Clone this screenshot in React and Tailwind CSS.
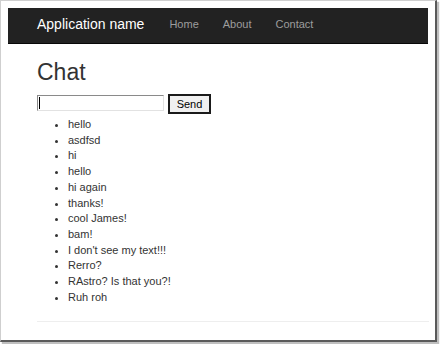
import React from "react";

const messages = [
  "hello",
  "asdfsd",
  "hi",
  "hello",
  "hi again",
  "thanks!",
  "cool James!",
  "bam!",
  "I don't see my text!!!",
  "Rerro?",
  "RAstro? Is that you?!",
  "Ruh roh",
];

function App() {
  return (
    <div className="w-[440px] h-[344px] bg-white overflow-hidden font-['Liberation_Sans',Arial,sans-serif]">
      <div className="w-[437px] h-[342px] bg-white border-l border-t border-[#cfcfcf] border-r-2 border-b-2 border-r-[#5a5a5a] border-b-[#5a5a5a] shadow-[2px_2px_1px_rgba(0,0,0,0.25)]">
        {/* Navbar */}
        <nav className="ml-[7px] mt-[7px] w-[420px] h-[36px] bg-[#222222] border-b border-[#080808] flex items-center pl-[29px] pb-[2px]">
          <span className="text-[14px] text-white">Application name</span>
          <div className="flex ml-[13px]">
            <span className="px-[12px] text-[11px] text-[#9d9d9d]">Home</span>
            <span className="px-[12px] text-[11px] text-[#9d9d9d]">About</span>
            <span className="px-[12px] text-[11px] text-[#9d9d9d]">Contact</span>
          </div>
        </nav>

        {/* Body */}
        <div className="pl-[36px] pr-[8px]">
          <h2 className="mt-[15px] text-[23px] leading-[26px] text-[#333]">Chat</h2>
          <div className="mt-[9px] flex items-start gap-[4px]">
            <div className="mt-[1px] w-[127px] h-[16px] border border-t-[#8a8a8a] border-l-[#8a8a8a] border-r-[#e2e2e2] border-b-[#e2e2e2] bg-white flex items-center pl-[1px]">
              <div className="w-px h-[12px] bg-black" />
            </div>
            <button className="w-[43px] h-[20px] border-2 border-[#1a1a1a] bg-[#f0f0f0] text-[11px] text-black leading-none">
              Send
            </button>
          </div>
          <ul className="mt-[3px] pl-[31px] list-disc text-[11px] leading-[15.7px] text-[#333]">
            {messages.map((m, i) => (
              <li key={i}>{m}</li>
            ))}
          </ul>
          <hr className="mt-[16px] w-[392px] border-t border-[#eeeeee]" />
        </div>
      </div>
    </div>
  );
}

export default App;
